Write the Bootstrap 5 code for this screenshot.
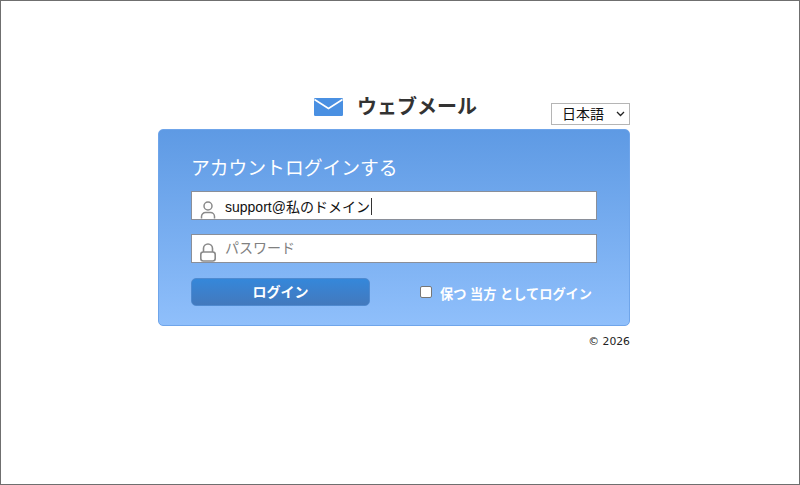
<!DOCTYPE html>
<html lang="ja">
<head>
<meta charset="utf-8">
<title>ウェブメール</title>
<link href="https://cdn.jsdelivr.net/npm/bootstrap@5.3.0/dist/css/bootstrap.min.css" rel="stylesheet">
<style>
html,body{height:485px;overflow:hidden;}
body{font-family:"Liberation Sans","Noto Sans CJK JP",sans-serif;color:#212529;background:#fff;}
.page-frame{height:485px;border:1px solid #6f6f6f;padding:93px 0 0 157px;}
.login-wrap{width:472px;}
.head-row{height:35px;position:relative;}
.brand{margin-left:156px;height:25px;gap:14px;}
.brand-name{font-size:20px;font-weight:700;line-height:25px;color:#333;position:relative;top:1px;}
.lang-select{position:absolute;right:0;top:9px;width:79px;height:22px;font-size:14px;background:#fff url("data:image/svg+xml,%3Csvg xmlns='http://www.w3.org/2000/svg' width='9' height='6'%3E%3Cpath d='M1 1l3.5 3.5L8 1' fill='none' stroke='%23222' stroke-width='1.3'/%3E%3C/svg%3E") no-repeat right 4px center;border:1px solid #b5b5b5;border-radius:0;padding:0 0 0 10px;color:#111;font-family:inherit;appearance:none;-webkit-appearance:none;}
.login-panel{height:197px;padding:27px 32px 0;background:linear-gradient(#5e9ae4,#8fbffb);border:1px solid #6fa5ea;border-radius:5px;}
.panel-title{font-size:18.8px;line-height:24px;font-weight:400;color:#fff;margin:0 0 10px;}
.field{position:relative;height:29px;margin-bottom:14px;}
.field .form-control{height:29px;border-radius:0;border:1px solid #8a8f99;padding:0 0 0 33px;font-size:14px;line-height:20px;color:#111;box-shadow:none;}
.field .pw-input{padding-bottom:2px;}
.field .form-control::placeholder{color:#808080;opacity:1;}
.field-icon{position:absolute;left:8px;bottom:1px;width:18px;height:20px;}
.text-caret{position:absolute;left:180px;top:7px;width:1px;height:17px;background:#333;}
.action-row{padding-top:1px;}
.btn-login{width:179px;height:28px;padding:0;font-size:14px;font-weight:700;color:#fff;border:1px solid #4f8ad0;border-radius:5px;background:linear-gradient(#3587da,#4379bd);}
.btn-login:hover{color:#fff;background:linear-gradient(#3587da,#4379bd);}
.keep-check{margin-left:50px;gap:8px;}
.keep-check .form-check-input{width:12px;height:12px;margin:0;border:1px solid #767676;border-radius:2px;}
.keep-check label{font-size:13.2px;font-weight:700;color:#fff;position:relative;top:3px;}
.copy-line{font-size:10.8px;line-height:14px;margin-top:9px;color:#222;font-family:"DejaVu Sans",sans-serif;}
</style>
</head>
<body>
<div class="page-frame">
  <div class="login-wrap">
    <div class="head-row">
      <div class="brand d-flex align-items-center">
        <svg width="29" height="18" viewBox="0 0 29 18" aria-hidden="true"><rect width="29" height="18" rx="1.2" fill="#4a90e2"/><path d="M0.5 1.5 14.5 10.5 28.5 1.5" fill="none" stroke="#fff" stroke-width="1.6"/></svg>
        <span class="brand-name">ウェブメール</span>
      </div>
      <select class="lang-select"><option>日本語</option></select>
    </div>
    <form class="login-panel">
      <h1 class="panel-title">アカウントログインする</h1>
      <div class="field">
        <svg class="field-icon" viewBox="0 0 18 20" aria-hidden="true"><circle cx="9" cy="7" r="4" fill="none" stroke="#8a8a8a" stroke-width="1.5"/><path d="M2.5 19.5v-2a4 4 0 0 1 4-4h5a4 4 0 0 1 4 4v2" fill="none" stroke="#8a8a8a" stroke-width="1.5"/></svg>
        <input class="form-control" type="text" value="support@私のドメイン">
        <span class="text-caret"></span>
      </div>
      <div class="field">
        <svg class="field-icon" viewBox="0 0 18 20" aria-hidden="true"><path d="M4.5 10V6.5a4.5 4.5 0 0 1 9 0V10" fill="none" stroke="#8a8a8a" stroke-width="1.6"/><rect x="1.8" y="10" width="14.4" height="9" rx="2.5" fill="none" stroke="#8a8a8a" stroke-width="1.6"/></svg>
        <input class="form-control pw-input" type="password" placeholder="パスワード">
      </div>
      <div class="action-row d-flex align-items-center">
        <button type="button" class="btn btn-login">ログイン</button>
        <div class="keep-check d-flex align-items-center">
          <input class="form-check-input" type="checkbox" id="keep">
          <label for="keep">保つ 当方 としてログイン</label>
        </div>
      </div>
    </form>
    <div class="copy-line text-end">© 2026</div>
  </div>
</div>
</body>
</html>
